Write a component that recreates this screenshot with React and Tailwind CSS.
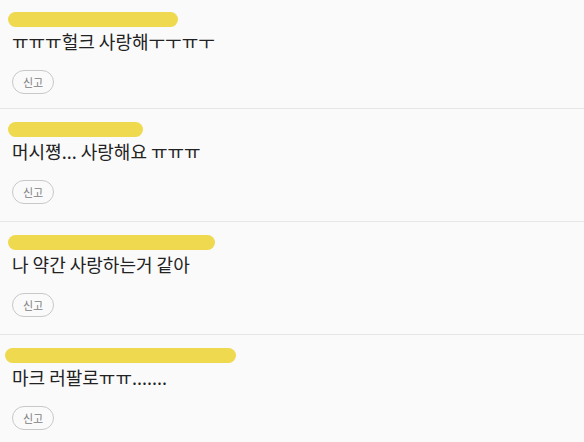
import React from 'react';

const comments = [
    { id: 1, text: 'ㅠㅠㅠ헐크 사랑해ㅜㅜㅠㅜ', bar: { w: 170, x: -4, top: 17 }, pb: 14 },
    { id: 2, text: '머시쪙... 사랑해요 ㅠㅠㅠ', bar: { w: 135, x: -4, top: 13 }, pb: 17 },
    { id: 3, text: '나 약간 사랑하는거 같아', bar: { w: 207, x: -4, top: 13 }, pb: 17 },
    { id: 4, text: '마크 러팔로ㅠㅠ.......', bar: { w: 231, x: -7, top: 13 }, pb: 17 },
];

export default function App() {
    return (
        <div
            className="min-h-screen w-full overflow-hidden bg-[#fafafa]"
            style={{ fontFamily: '"Noto Sans CJK KR", "Noto Sans", sans-serif' }}
        >
            <div className="-mt-[5px]">
                {comments.map(c => (
                    <div key={c.id} className="border-b border-[#e6e6e6] px-3" style={{ paddingBottom: c.pb }}>
                        {/* 닉네임 가림 처리 */}
                        <div className="h-[15px]" style={{ marginTop: c.bar.top }}>
                            <span
                                className="block h-[15px] rounded-full bg-[#efd94f]"
                                style={{ width: c.bar.w, marginLeft: c.bar.x }}
                            />
                        </div>
                        <p className="mt-[2px] text-[18px] leading-6 text-[#222]">{c.text}</p>
                        <div className="mt-[17px] flex">
                            <button className="h-6 rounded-full border border-[#c8c8c8] bg-transparent px-[10px] text-[11px] leading-none text-[#808080]">
                                신고
                            </button>
                        </div>
                    </div>
                ))}
            </div>
        </div>
    );
}
